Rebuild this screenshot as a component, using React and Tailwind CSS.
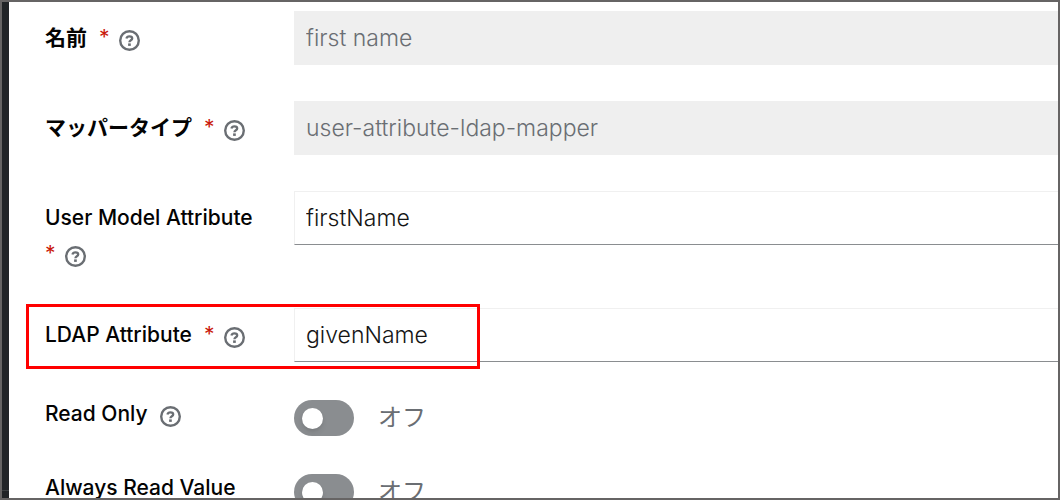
import React, { useState } from "react";

function HelpButton({ label }) {
    return (
        <button type="button" aria-label={`${label} help`} className="mt-1 text-[#6a6e73]">
            <svg viewBox="0 0 21 21" className="block size-[21px]" fill="none" stroke="currentColor">
                <circle cx="10.5" cy="10.5" r="9.3" strokeWidth="2.4" />
                <path
                    d="M7.4 8.5C7.8 7.1 8.9 6.4 10.4 6.4C12.1 6.4 13.2 7.2 13.2 8.5C13.2 10.3 10.4 10.2 10.4 12.3"
                    strokeWidth="2.3"
                />
                <rect x="9.1" y="13.4" width="2.7" height="2.5" fill="currentColor" stroke="none" />
            </svg>
        </button>
    );
}

function FieldLabel({ id, label, lang, required }) {
    return (
        <div className="flex flex-wrap items-center gap-x-3 pr-9 text-[21px] leading-9">
            <label htmlFor={id} lang={lang} className="font-medium text-[#030303] [&:lang(ja)]:font-bold">
                {label}
            </label>
            {required && (
                <span aria-hidden="true" className="w-2 text-[#c9190b]">
                    *
                </span>
            )}
            <HelpButton label={label} />
        </div>
    );
}

function TextField({ id, label, lang, defaultValue, disabled, highlighted }) {
    return (
        <div className="relative grid grid-cols-[249px_1fr] items-start">
            <div className="pt-[9px]">
                <FieldLabel id={id} label={label} lang={lang} required />
            </div>
            <input
                id={id}
                type="text"
                required
                disabled={disabled}
                defaultValue={defaultValue}
                className="h-[54px] w-full min-w-0 border border-r-0 border-[#f0f0f0] border-b-[#8a8d90] px-[11px] text-[23px] font-light text-[#151515] outline-none disabled:border-[#efefef] disabled:bg-[#efefef] disabled:text-[#6a6e73]"
            />
            {/* Callout frame */}
            {highlighted && (
                <div className="pointer-events-none absolute -top-1 -left-[19px] h-[65px] w-[454px] border-3 border-[#ff0000]" />
            )}
        </div>
    );
}

function SwitchField({ id, label }) {
    const [checked, setChecked] = useState(false);

    return (
        <div className="grid h-[38px] grid-cols-[249px_1fr] items-start">
            <div className="-mt-0.5">
                <FieldLabel id={id} label={label} />
            </div>
            <div className="flex items-center gap-6 pt-0.5">
                <input
                    id={id}
                    type="checkbox"
                    role="switch"
                    checked={checked}
                    onChange={(e) => setChecked(e.target.checked)}
                    className="flex h-9 w-[60px] shrink-0 appearance-none items-center rounded-full bg-[#8a8d90] px-2 before:size-[21px] before:rounded-full before:bg-white before:shadow-md checked:justify-end checked:bg-[#0066cc]"
                />
                <span className="text-2xl leading-9 text-[#6a6e73]">{checked ? "オン" : "オフ"}</span>
            </div>
        </div>
    );
}

function App() {
    return (
        <div className="flex h-screen overflow-hidden border-2 border-[#666464] bg-white font-['Inter','Noto_Sans_CJK_JP',sans-serif]">
            {/* Sidebar edge */}
            <aside className="flex w-[7px] shrink-0 flex-col justify-end bg-[#212427]">
                <div className="h-2 border-t border-[#3c3f42]" />
            </aside>

            <main className="min-w-0 flex-1 overflow-hidden pt-[9px] pl-9">
                <form className="flex flex-col gap-9">
                    <TextField id="name" label="名前" lang="ja" defaultValue="first name" disabled />
                    <TextField
                        id="mapper-type"
                        label="マッパータイプ"
                        lang="ja"
                        defaultValue="user-attribute-ldap-mapper"
                        disabled
                    />
                    <TextField id="user-attribute" label="User Model Attribute" defaultValue="firstName" />
                    <TextField id="ldap-attribute" label="LDAP Attribute" defaultValue="givenName" highlighted />
                    <SwitchField id="read-only" label="Read Only" />
                    <SwitchField id="always-read" label="Always Read Value" />
                </form>
            </main>
        </div>
    );
}

export default App;
